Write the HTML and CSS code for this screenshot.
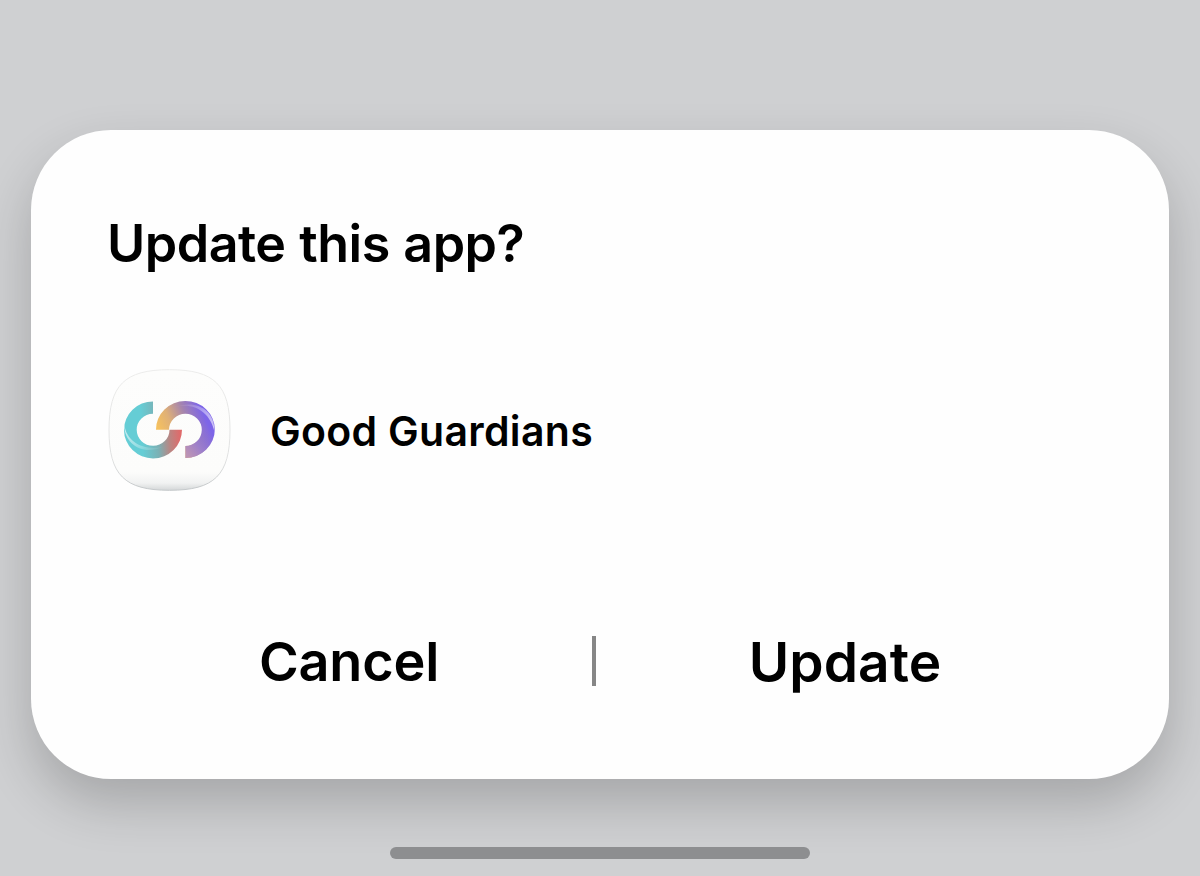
FILE: index.html
```html
<!DOCTYPE html>
<html lang="en">
<head>
<meta charset="utf-8">
<title>Update this app?</title>
<link rel="stylesheet" href="styles.css">
</head>
<body>
<main class="dialog">
  <h1 class="title">Update this app?</h1>
  <div class="app">
    <svg class="app-icon" viewBox="0 0 123 122" aria-hidden="true">
      <defs>
        <linearGradient id="tile" x1="0" y1="0" x2="0" y2="1">
          <stop offset="0" stop-color="#fdfdfc"/><stop offset=".85" stop-color="#fcfcfb"/><stop offset=".94" stop-color="#f1f2f2"/><stop offset="1" stop-color="#d4d7d8"/>
        </linearGradient>
        <linearGradient id="edge" x1="0" y1="0" x2="0" y2="1">
          <stop offset="0" stop-color="#ececeb"/><stop offset=".75" stop-color="#e0e1e1"/><stop offset="1" stop-color="#c3c7c9"/>
        </linearGradient>
        <linearGradient id="teal" gradientUnits="userSpaceOnUse" x1="34" y1="66" x2="72" y2="64">
          <stop offset="0" stop-color="#65cdd5"/><stop offset=".42" stop-color="#7bb0b4"/><stop offset=".72" stop-color="#b98683"/><stop offset="1" stop-color="#df6b6b"/>
        </linearGradient>
        <linearGradient id="violet" gradientUnits="userSpaceOnUse" x1="50" y1="60" x2="94" y2="41">
          <stop offset="0" stop-color="#f6c15e"/><stop offset=".3" stop-color="#dfb077"/><stop offset=".65" stop-color="#a383b0"/><stop offset="1" stop-color="#7d65e8"/>
        </linearGradient>
        <linearGradient id="tail" gradientUnits="userSpaceOnUse" x1="77" y1="84" x2="100" y2="64">
          <stop offset="0" stop-color="#bd94b5"/><stop offset=".5" stop-color="#9a7dd2" stop-opacity=".8"/><stop offset="1" stop-color="#7d65e8" stop-opacity="0"/>
        </linearGradient>
        <linearGradient id="shineLeft" x1="0" y1="0" x2="1" y2="1">
          <stop offset="0" stop-color="#fff" stop-opacity=".7"/><stop offset=".5" stop-color="#fff" stop-opacity=".4"/><stop offset="1" stop-color="#fff" stop-opacity="0"/>
        </linearGradient>
        <linearGradient id="shineRight" x1="0" y1="0" x2="1" y2="1">
          <stop offset="0" stop-color="#fff" stop-opacity="0"/><stop offset=".5" stop-color="#fff" stop-opacity=".4"/><stop offset="1" stop-color="#fff" stop-opacity=".7"/>
        </linearGradient>
      </defs>
      <path fill="url(#tile)" stroke="url(#edge)" d="M61.5 .7C106.500 .7 122 16 122 61S106.500 121.300 61.500 121.300 1 106 1 61 16.500 .7 61.500 .7Z"/>
      <path fill="url(#teal)" d="M45 32.400A29 28.500 0 1 0 74 60.800H61.500A16.400 16 0 1 1 45 44.800Z"/>
      <path fill="url(#shineLeft)" d="M16.300 56C19 73 35 82 55 78C35 87 16 75 16.300 56Z"/>
      <path fill="url(#violet)" d="M48 60.800A29.400 28.500 0 1 1 77.400 89V77.100A16.400 16.200 0 1 0 61 60.800Z"/>
      <path fill="url(#tail)" d="M77.400 89V77.100A16.400 16.200 0 0 0 93.800 60.800H106.500A29 28.200 0 0 1 77.400 89Z"/>
      <path fill="url(#shineRight)" d="M67 38C87 33 102 44 106.300 62C107 41 88 30 67 38Z"/>
    </svg>
    <span class="app-name">Good Guardians</span>
  </div>
  <div class="actions">
    <button class="action">Cancel</button>
    <i class="divider"></i>
    <button class="action update">Update</button>
  </div>
</main>
<div class="home-bar"></div>
</body>
</html>
```
FILE: styles.css
```css
* { box-sizing: border-box; }
body {
  margin: 0;
  height: 876px;
  padding: 130px 31px 0;
  overflow: hidden;
  background: #cfd0d2;
  color: #000;
  font-family: Inter, "Liberation Sans", sans-serif;
}
.dialog {
  height: 649px;
  padding: 83px 75px 0;
  border-radius: 80px;
  background: #fefefe;
  box-shadow: 0 24px 52px rgba(0, 0, 0, .2);
}
.title {
  margin: 0 0 0 1px;
  font-size: 52px;
  line-height: 62px;
  font-weight: 600;
  letter-spacing: -.5px;
  word-spacing: 1px;
}
.app {
  display: flex;
  align-items: center;
  gap: 39px;
  margin: 94px 0 0 2px;
}
.app-icon { display: block; width: 123px; height: 122px; }
.app-name { padding-top: 1px; font-size: 41px; line-height: 50px; font-weight: 600; letter-spacing: .3px; }
.actions {
  display: grid;
  grid-template-columns: 486px 4px 1fr;
  align-items: center;
  height: 80px;
  margin-top: 130px;
}
.action {
  border: 0;
  padding: 2px 0 0;
  background: none;
  color: inherit;
  font: 600 54px/66px Inter, "Liberation Sans", sans-serif;
  letter-spacing: -.2px;
}
.update { font-size: 55px; letter-spacing: .1px; }
.divider { width: 3.500px; height: 50px; background: #868686; }
.home-bar { width: 420px; height: 12px; margin: 68px auto 0; border-radius: 6px; background: #8d8e90; }
```
